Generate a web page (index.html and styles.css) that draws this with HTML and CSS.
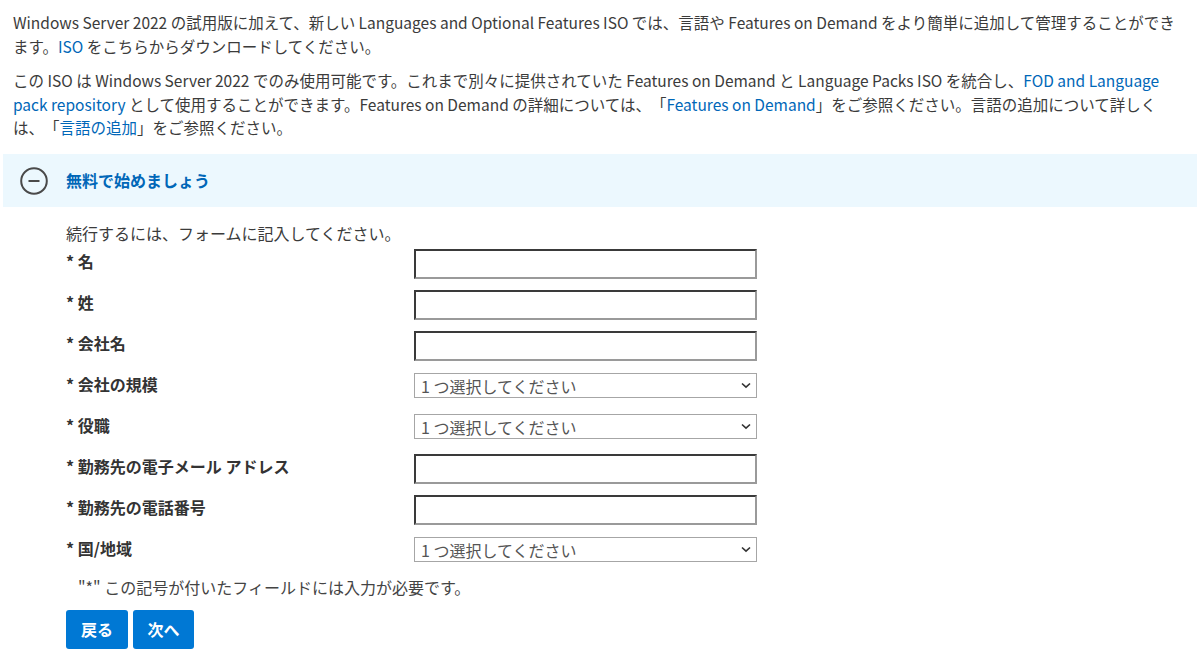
FILE: index.html
```html
<!DOCTYPE html>
<html lang="ja">
<head>
<meta charset="utf-8">
<link rel="stylesheet" href="styles.css">
</head>
<body>
<div class="page">
  <p class="intro">Windows Server 2022 の試用版に加えて、新しい Languages and Optional Features ISO では、言語や Features on Demand をより簡単に追加して管理することができます。<a href="#">ISO</a> をこちらからダウンロードしてください。</p>
  <p class="intro second">この ISO は Windows Server 2022 でのみ使用可能です。これまで別々に提供されていた Features on Demand と Language Packs ISO を統合し、<a href="#">FOD and Language pack repository</a> として使用することができます。Features on Demand の詳細については、「<a href="#">Features on Demand</a>」をご参照ください。言語の追加について詳しくは、「<a href="#">言語の追加</a>」をご参照ください。</p>

  <div class="accordion-head">
    <svg class="toggle" width="28" height="28" viewBox="0 0 28 28" aria-hidden="true">
      <circle cx="14" cy="14" r="12.8" fill="none" stroke="#4a4a4a" stroke-width="2"/>
      <line x1="8.5" y1="14" x2="19.5" y2="14" stroke="#4a4a4a" stroke-width="2"/>
    </svg>
    <span class="accordion-title">無料で始めましょう</span>
  </div>

  <div class="form-area">
    <div class="lead">続行するには、フォームに記入してください。</div>
    <div class="row"><label class="lbl">* 名</label><input class="txt" type="text"></div>
    <div class="row"><label class="lbl">* 姓</label><input class="txt" type="text"></div>
    <div class="row"><label class="lbl">* 会社名</label><input class="txt" type="text"></div>
    <div class="row"><label class="lbl">* 会社の規模</label>
      <div class="sel-wrap"><select class="sel"><option>1 つ選択してください</option></select>
        <svg class="chev" width="10" height="7" viewBox="0 0 10 7"><path d="M1 1.5 L5 5.2 L9 1.5" fill="none" stroke="#333" stroke-width="1.6"/></svg></div></div>
    <div class="row"><label class="lbl">* 役職</label>
      <div class="sel-wrap"><select class="sel"><option>1 つ選択してください</option></select>
        <svg class="chev" width="10" height="7" viewBox="0 0 10 7"><path d="M1 1.5 L5 5.2 L9 1.5" fill="none" stroke="#333" stroke-width="1.6"/></svg></div></div>
    <div class="row"><label class="lbl">* 勤務先の電子メール アドレス</label><input class="txt" type="text"></div>
    <div class="row"><label class="lbl">* 勤務先の電話番号</label><input class="txt" type="text"></div>
    <div class="row"><label class="lbl">* 国/地域</label>
      <div class="sel-wrap"><select class="sel"><option>1 つ選択してください</option></select>
        <svg class="chev" width="10" height="7" viewBox="0 0 10 7"><path d="M1 1.5 L5 5.2 L9 1.5" fill="none" stroke="#333" stroke-width="1.6"/></svg></div></div>
    <div class="note">"*" この記号が付いたフィールドには入力が必要です。</div>
    <div class="buttons">
      <button class="btn back" type="button">戻る</button>
      <button class="btn next" type="button">次へ</button>
    </div>
  </div>
</div>
</body>
</html>
```

FILE: styles.css
```css
html, body {
  margin: 0;
  padding: 0;
  background: #fff;
}
body {
  font-family: "Noto Sans CJK JP", "Noto Sans", sans-serif;
  font-size: 15.5px;
  color: #3b3b3b;
  text-spacing-trim: space-all;
}
.page {
  padding: 10px 3px 0 3px;
}
.intro {
  margin: 0;
  padding: 0 10px;
  line-height: 24px;
}
.intro.second {
  margin-top: 11px;
  line-height: 23.5px;
}
a {
  color: #0067b8;
  text-decoration: none;
}
.accordion-head {
  margin-top: 14px;
  height: 53px;
  background: #ecf8fe;
  display: flex;
  align-items: center;
  padding-left: 17px;
}
.toggle {
  display: block;
  margin-top: 2px;
}
.accordion-title {
  margin-left: 18px;
  color: #0067b8;
  font-weight: bold;
  font-size: 16px;
}
.form-area {
  padding: 14px 0 0 63px;
  font-size: 16px;
}
.lead {
  line-height: 24px;
  height: 24px;
  margin-bottom: 4px;
}
.row {
  display: flex;
  align-items: flex-start;
  height: 41px;
}
.lbl {
  width: 348px;
  flex: none;
  font-weight: bold;
  line-height: 24px;
  color: #333;
}
.txt {
  box-sizing: border-box;
  width: 343px;
  height: 30px;
  margin: 0;
  border-style: solid;
  border-width: 2px;
  border-color: #3a3a3a #9a9a9a #9a9a9a #3a3a3a;
  background: #fff;
  padding: 0 6px;
  font: inherit;
}
.sel-wrap {
  position: relative;
  width: 343px;
  height: 25px;
  margin-top: 1px;
}
.sel {
  -webkit-appearance: none;
  appearance: none;
  box-sizing: border-box;
  width: 343px;
  height: 25px;
  margin: 0;
  border: 1px solid #a6a6a6;
  border-radius: 0;
  background: #fff;
  padding: 0 0 0 6px;
  font-family: "Noto Sans CJK JP", "Noto Sans", sans-serif;
  font-size: 16px;
  color: #555;
}
.chev {
  position: absolute;
  right: 6px;
  top: 9px;
  pointer-events: none;
}
.note {
  padding-left: 12px;
  line-height: 20px;
  color: #444;
  font-size: 16px;
}
.buttons {
  display: flex;
  gap: 5px;
  margin-top: 13px;
}
.btn {
  height: 39px;
  width: 62px;
  border: none;
  border-radius: 3px;
  background: #0078d4;
  color: #fff;
  font-family: "Noto Sans CJK JP", sans-serif;
  font-size: 16px;
  font-weight: bold;
  padding: 0;
}
.btn.next {
  width: 61px;
}
```
